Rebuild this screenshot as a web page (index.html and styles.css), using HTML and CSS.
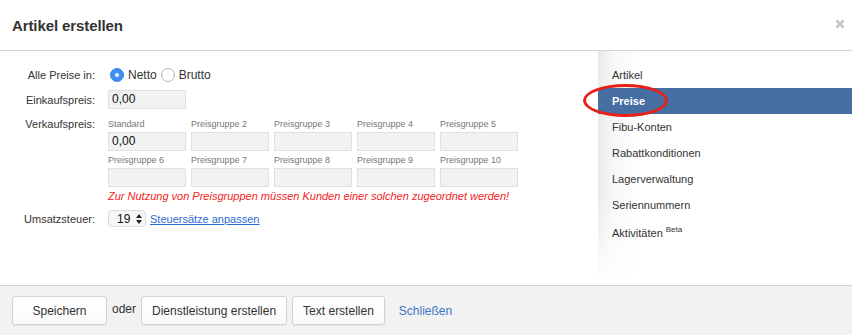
FILE: index.html
```html
<!DOCTYPE html>
<html lang="de">
<head>
<meta charset="utf-8">
<title>Artikel erstellen</title>
<link rel="stylesheet" href="styles.css">
</head>
<body>
<div class="modal">
  <header class="head">
    <h1 class="title">Artikel erstellen</h1>
    <span class="close" aria-label="Schließen">
      <svg width="10" height="10" viewBox="0 0 10 10"><path d="M1.5 1.5 L8.5 8.5 M8.5 1.5 L1.5 8.5" stroke="#c9c9c9" stroke-width="2.6" stroke-linecap="butt"/></svg>
    </span>
  </header>
  <div class="body">
    <div class="form">
      <div class="row r-radio">
        <span class="lbl">Alle Preise in:</span>
        <div class="ctl radios">
          <span class="radio checked"></span><span class="rtext">Netto</span>
          <span class="radio"></span><span class="rtext">Brutto</span>
        </div>
      </div>
      <div class="row r-ek">
        <span class="lbl">Einkaufspreis:</span>
        <div class="ctl"><span class="inp">0,00</span></div>
      </div>
      <div class="row r-vk">
        <span class="lbl lbl-top">Verkaufspreis:</span>
        <div class="ctl">
          <div class="grid">
            <div class="cell"><span class="small">Standard</span><span class="inp">0,00</span></div>
            <div class="cell"><span class="small">Preisgruppe 2</span><span class="inp"></span></div>
            <div class="cell"><span class="small">Preisgruppe 3</span><span class="inp"></span></div>
            <div class="cell"><span class="small">Preisgruppe 4</span><span class="inp"></span></div>
            <div class="cell"><span class="small">Preisgruppe 5</span><span class="inp"></span></div>
            <div class="cell"><span class="small">Preisgruppe 6</span><span class="inp"></span></div>
            <div class="cell"><span class="small">Preisgruppe 7</span><span class="inp"></span></div>
            <div class="cell"><span class="small">Preisgruppe 8</span><span class="inp"></span></div>
            <div class="cell"><span class="small">Preisgruppe 9</span><span class="inp"></span></div>
            <div class="cell"><span class="small">Preisgruppe 10</span><span class="inp"></span></div>
          </div>
          <p class="warn">Zur Nutzung von Preisgruppen müssen Kunden einer solchen zugeordnet werden!</p>
        </div>
      </div>
      <div class="row r-tax">
        <span class="lbl">Umsatzsteuer:</span>
        <div class="ctl tax">
          <span class="select">19
            <svg class="spin" width="6" height="10" viewBox="0 0 6 10"><path d="M3 0 L6 4 L0 4 Z M3 10 L6 6 L0 6 Z" fill="#222"/></svg>
          </span>
          <a class="link" href="#">Steuersätze anpassen</a>
        </div>
      </div>
    </div>
    <nav class="side">
      <a class="item">Artikel</a>
      <a class="item active">Preise</a>
      <a class="item">Fibu-Konten</a>
      <a class="item">Rabattkonditionen</a>
      <a class="item">Lagerverwaltung</a>
      <a class="item">Seriennummern</a>
      <a class="item item-last">Aktivitäten <sup class="beta">Beta</sup></a>
    </nav>
  </div>
  <footer class="foot">
    <button class="btn btn-save">Speichern</button>
    <span class="oder">oder</span>
    <button class="btn">Dienstleistung erstellen</button>
    <button class="btn">Text erstellen</button>
    <a class="flink" href="#">Schließen</a>
  </footer>
  <span class="ring"></span>
</div>
</body>
</html>
```
FILE: styles.css
```css
html, body {
  margin: 0;
  padding: 0;
  background: #fff;
}
body {
  font-family: "Liberation Sans", Arial, sans-serif;
  color: #333;
  font-size: 11px;
}
.modal {
  position: relative;
  width: 852px;
  height: 335px;
  display: flex;
  flex-direction: column;
  overflow: hidden;
}
.head {
  height: 50px;
  border-bottom: 1px solid #d4d4d4;
  display: flex;
  align-items: center;
  justify-content: space-between;
  padding: 0 7px 0 12px;
  flex: none;
}
.title {
  margin: 0;
  font-size: 15px;
  font-weight: bold;
  color: #333;
  letter-spacing: -0.1px;
}
.close {
  display: flex;
  margin-top: -2px;
}
.body {
  flex: 1;
  display: flex;
}
.form {
  flex: 1;
  padding-top: 16px;
}
.row {
  display: flex;
}
.lbl {
  width: 95px;
  text-align: right;
  margin-right: 13px;
  flex: none;
  color: #333;
  font-size: 11px;
}
.r-radio {
  height: 16px;
  align-items: center;
}
.radios {
  display: flex;
  align-items: center;
}
.radio {
  width: 12px;
  height: 12px;
  border-radius: 50%;
  border: 1px solid #b5b5b5;
  background: #fff;
  margin-left: 2px;
  margin-right: 4px;
  box-sizing: content-box;
  position: relative;
}
.radio.checked {
  background: #3a8ff6;
  border-color: #3585ea;
}
.radio.checked::after {
  content: "";
  position: absolute;
  left: 4px;
  top: 4px;
  width: 4px;
  height: 4px;
  border-radius: 50%;
  background: #fff;
}
.rtext {
  font-size: 12px;
  margin-right: 2px;
}
.r-ek {
  margin-top: 7px;
  align-items: center;
}
.inp {
  display: block;
  box-sizing: border-box;
  width: 78px;
  height: 19px;
  background: #f2f2f2;
  border: 1px solid #e0e0e0;
  font-size: 12px;
  line-height: 17px;
  padding-left: 3px;
  color: #111;
}
.r-vk {
  margin-top: 9px;
}
.lbl-top {
  line-height: 13px;
}
.grid {
  display: grid;
  grid-template-columns: repeat(5, 78px);
  column-gap: 5px;
  row-gap: 3px;
}
.cell {
  display: flex;
  flex-direction: column;
}
.small {
  font-size: 9px;
  line-height: 13px;
  color: #777;
  margin-bottom: 1px;
}
.warn {
  margin: 3px 0 0;
  font-size: 11px;
  line-height: 13px;
  font-style: italic;
  color: #f4221b;
  white-space: nowrap;
}
.r-tax {
  margin-top: 7px;
  align-items: center;
}
.tax {
  display: flex;
  align-items: center;
}
.select {
  box-sizing: border-box;
  width: 38px;
  height: 17px;
  border: 1px solid #dcdcdc;
  border-radius: 4px;
  background: #f7f7f7;
  font-size: 12px;
  color: #111;
  display: flex;
  align-items: center;
  padding-left: 8px;
  gap: 6px;
}
.link {
  margin-left: 4px;
  color: #2c6bd6;
  font-size: 11px;
}
.side {
  width: 254px;
  flex: none;
  padding-top: 11px;
  background:
    linear-gradient(to bottom, rgba(255,255,255,0) 60%, #fff 100%),
    linear-gradient(to right, #e9e9e9 0, #f6f6f6 14px, #fff 42px);
  display: flex;
  flex-direction: column;
}
.item {
  display: flex;
  align-items: center;
  height: 26px;
  padding-left: 14px;
  color: #333;
  font-size: 11px;
}
.item-last {
  margin-top: 2px;
}
.item.active {
  background: #466ea3;
  color: #fff;
  font-weight: bold;
}
.beta {
  font-size: 8px;
  margin-left: 3px;
  align-self: flex-start;
  margin-top: 6px;
  line-height: 1;
}
.foot {
  height: 49px;
  border-top: 1px solid #d0d0d0;
  background: #f2f2f2;
  display: flex;
  align-items: center;
  padding-left: 12px;
  flex: none;
}
.btn {
  height: 29px;
  padding: 0 10px;
  font-family: "Liberation Sans", Arial, sans-serif;
  font-size: 12px;
  color: #333;
  background: linear-gradient(#fff, #f9f9f9);
  border: 1px solid #d2d2d2;
  border-radius: 3px;
  box-shadow: 0 1px 1px rgba(0,0,0,0.05);
  margin-right: 5px;
}
.btn-save {
  width: 95px;
  margin-right: 5px;
}
.oder {
  font-size: 12px;
  margin-right: 5px;
  margin-top: -3px;
}
.flink {
  margin-left: 9px;
  color: #3a76c6;
  font-size: 12px;
  text-decoration: none;
}
.ring {
  position: absolute;
  left: 583px;
  top: 84px;
  width: 85px;
  height: 33px;
  box-sizing: border-box;
  border: 3px solid #ea1f18;
  border-radius: 50%;
}
```
